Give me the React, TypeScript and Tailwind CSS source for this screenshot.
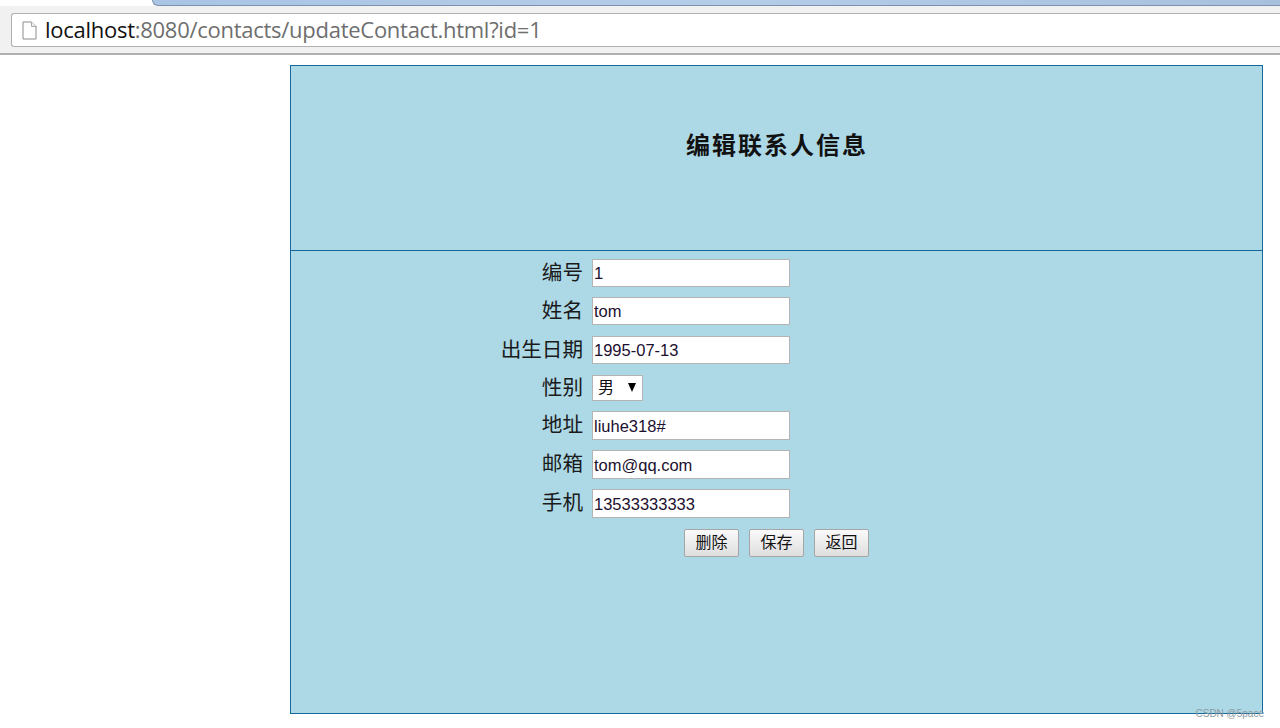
import React from 'react';

const CJK = 'font-["Liberation_Sans","Noto_Sans_CJK_SC",sans-serif]';

const rows = [
	{ label: '编号', value: '1', rowClass: 'h-[28px]' },
	{ label: '姓名', value: 'tom', rowClass: 'h-[28px] mt-[10px]' },
	{ label: '出生日期', value: '1995-07-13', rowClass: 'h-[28px] mt-[11px]' },
];

const rowsAfterSelect = [
	{ label: '地址', value: 'liuhe318#', rowClass: 'h-[29px] mt-[10px]' },
	{ label: '邮箱', value: 'tom@qq.com', rowClass: 'h-[29px] mt-[10px]' },
	{ label: '手机', value: '13533333333', rowClass: 'h-[29px] mt-[10px]' },
];

const FormRow = ({ label, value, rowClass }: { label: string; value: string; rowClass: string }) => (
	<div className={`flex items-center ${rowClass}`}>
		<label className="w-[301px] pr-[9px] text-right text-[20.6px] leading-none text-[#1a1a1a]">{label}</label>
		<input
			readOnly
			value={value}
			className="h-full w-[198px] border border-[#b4b4b4] bg-white px-[1px] pt-[1px] text-[16.5px] text-[#1c1030] outline-none"
		/>
	</div>
);

const ActionButton = ({ label }: { label: string }) => (
	<button className="h-[28px] w-[55px] rounded-[2px] border border-[#a6a6a6] bg-gradient-to-b from-[#fafafa] to-[#dedede] text-[16px] text-[#111]">
		{label}
	</button>
);

export default function App() {
	return (
		<div className={`flex h-[728px] w-[1280px] flex-col overflow-hidden bg-white ${CJK}`}>
			{/* browser chrome */}
			<div className="h-[6px] bg-white pl-[152px]">
				<div className="h-full rounded-bl-[6px] border-b border-l border-[#7d93ad] bg-gradient-to-r from-[#a9c4e4] via-[#b4cde9] to-[#a6c0de]" />
			</div>
			<div className="h-[49px] border-b-[2px] border-[#b0b0b0] bg-[#f1f1f1] pt-[7px]">
				<div className="ml-[11px] flex h-[34px] items-center rounded-l-[3px] border border-r-0 border-[#b0b0b0] bg-white pl-[10px]">
					<svg width="15" height="19" viewBox="0 0 15 19" className="shrink-0">
						<path d="M1 1h8.5l4.5 4.5v12.5h-13z" fill="#fff" stroke="#8c8c8c" strokeWidth="1" />
						<path d="M9.5 1v4.5h4.5" fill="#eee" stroke="#a8a8a8" strokeWidth="1" />
					</svg>
					<span className='mb-[2px] ml-[8px] font-["Open_Sans",sans-serif] text-[22px] leading-none tracking-[-0.27px] text-[#6e6e6e]'>
						<span className="text-[#111]">localhost</span>:8080/contacts/updateContact.html?id=1
					</span>
				</div>
			</div>

			{/* page */}
			<div className="flex-1 pl-[290px] pt-[10px]">
				<div className="relative flex h-[649px] w-[973px] flex-col border border-[#14689a] bg-[#add8e6]">
					<div className="flex h-[185px] shrink-0 justify-center border-b border-[#14689a] pt-[64px]">
						<h1 className="ml-[1px] text-[24px] leading-[32px] font-bold tracking-[2px] text-[#111]">编辑联系人信息</h1>
					</div>
					<div className="flex flex-col pt-[8px]">
						{rows.map((row) => (
							<FormRow key={row.label} {...row} />
						))}
						<div className="mt-[11px] flex h-[26px] items-center">
							<label className="w-[301px] pr-[9px] text-right text-[20.6px] leading-none text-[#1a1a1a]">性别</label>
							<div className="relative h-full w-[51px]">
								<select className="h-full w-full appearance-none border border-[#b4b4b4] bg-white pl-[5px] text-[16px] text-[#111] outline-none">
									<option>男</option>
								</select>
								<span className="absolute right-[7px] top-[8px] h-0 w-0 border-x-[4px] border-t-[9px] border-x-transparent border-t-black" />
							</div>
						</div>
						{rowsAfterSelect.map((row) => (
							<FormRow key={row.label} {...row} />
						))}
						<div className="mt-[11px] flex gap-[10px] pl-[393px]">
							<ActionButton label="删除" />
							<ActionButton label="保存" />
							<ActionButton label="返回" />
						</div>
					</div>
					<span className="absolute -bottom-[6px] -right-[2px] text-[10px] leading-none text-[#8f9aa0]">CSDN @5pace</span>
				</div>
			</div>
		</div>
	);
}
